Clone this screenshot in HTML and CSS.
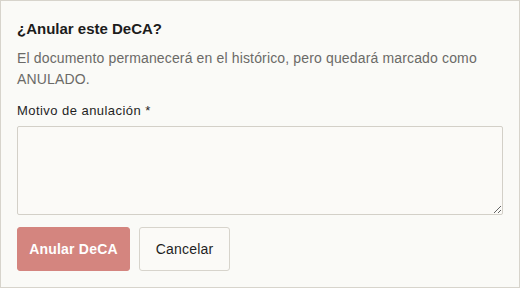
FILE: index.html
```html
<!DOCTYPE html>
<html lang="es">
<head>
<meta charset="utf-8">
<link rel="stylesheet" href="styles.css">
</head>
<body>
<div class="dialog">
  <h2 class="title">¿Anular este DeCA?</h2>
  <p class="desc">El documento permanecerá en el histórico, pero quedará marcado como ANULADO.</p>
  <label class="label" for="motivo">Motivo de anulación *</label>
  <textarea id="motivo" class="field"></textarea>
  <div class="actions">
    <button class="btn btn-danger">Anular DeCA</button>
    <button class="btn btn-secondary">Cancelar</button>
  </div>
</div>
</body>
</html>
```
FILE: styles.css
```css
html, body {
  margin: 0;
  padding: 0;
  background: #fafaf7;
}
body {
  font-family: "Liberation Sans", Arial, sans-serif;
  color: #1f1f1f;
}
.dialog {
  box-sizing: border-box;
  width: 520px;
  height: 288px;
  border: 1px solid #d7d4cc;
  background: #fafaf7;
  padding: 16px;
  display: flex;
  flex-direction: column;
}
.title {
  margin: 0;
  font-size: 15px;
  line-height: 24px;
  font-weight: 700;
  color: #1c1c1c;
  letter-spacing: 0;
}
.desc {
  margin: 7px 0 0;
  font-size: 14px;
  line-height: 21px;
  color: #6b6a67;
  letter-spacing: 0.15px;
}
.label {
  margin-top: 11px;
  font-size: 13px;
  line-height: 20px;
  font-weight: 500;
  color: #1f1f1f;
  letter-spacing: 0.45px;
}
.field {
  box-sizing: border-box;
  margin-top: 5px;
  width: 100%;
  height: 90px;
  border: 1px solid #d3d0c8;
  border-radius: 2px;
  background: #fbfaf7;
  resize: vertical;
  font-family: inherit;
}
.actions {
  margin-top: 12px;
  display: flex;
  gap: 9px;
}
.btn {
  height: 44px;
  padding: 0;
  border-radius: 3px;
  font-family: inherit;
  font-size: 14px;
  font-weight: 600;
  white-space: nowrap;
  letter-spacing: 0.2px;
}
.btn-danger {
  background: #d4857f;
  border: 1px solid #d4857f;
  color: #fff;
  width: 113px;
}
.btn-secondary {
  background: #fbfaf7;
  border: 1px solid #d7d4cc;
  color: #1f1f1f;
  font-weight: 500;
  width: 91px;
}
```
